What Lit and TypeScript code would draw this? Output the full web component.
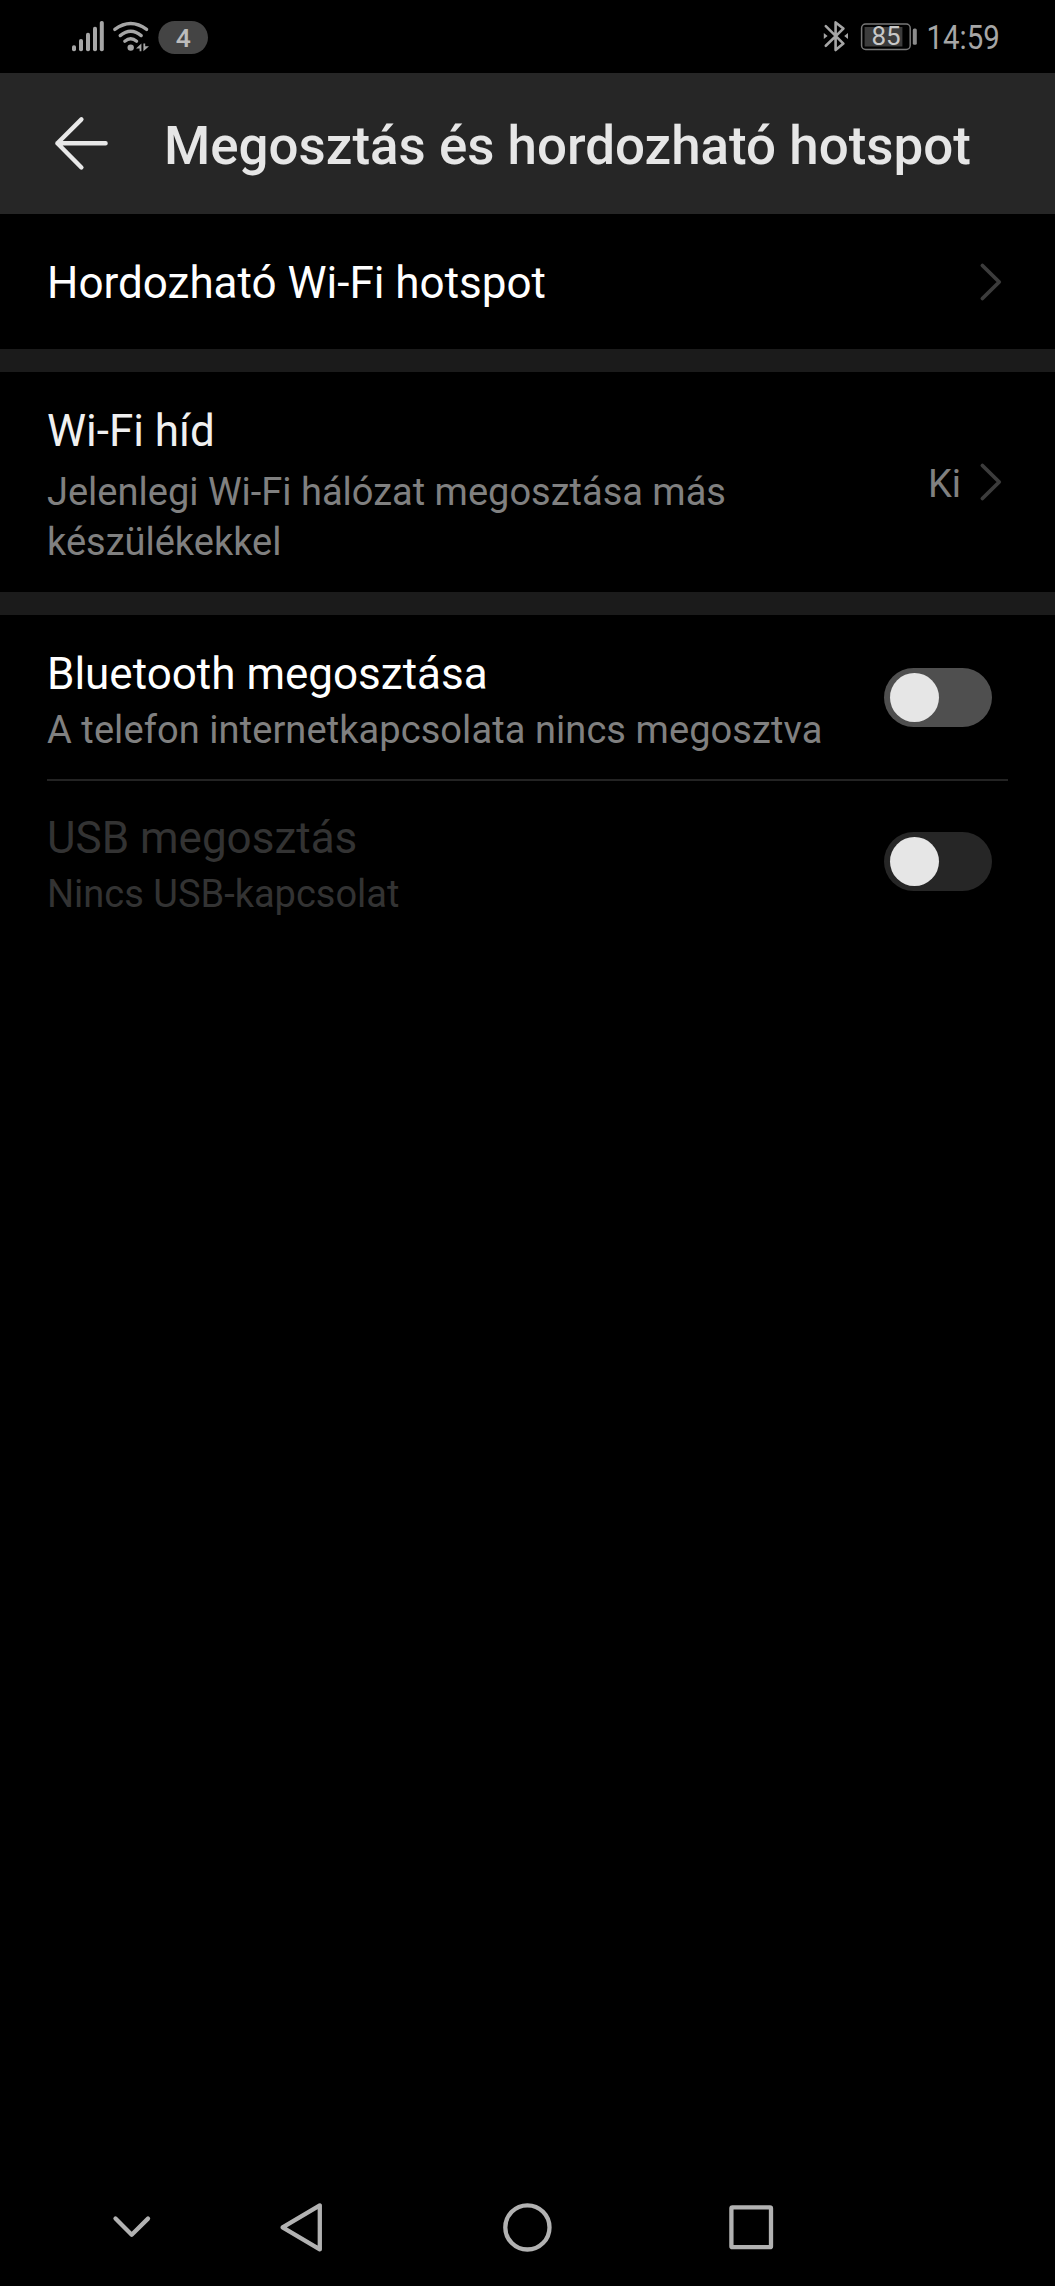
import { LitElement, html, css, svg, nothing } from "lit";
import { customElement, property } from "lit/decorators.js";

@customElement("status-bar")
class StatusBar extends LitElement {
  static styles = css`
    :host {
      display: flex;
      justify-content: space-between;
      height: 73px;
      background: #000;
    }
    svg {
      display: block;
      font-family: Roboto, "Liberation Sans", sans-serif;
    }
  `;

  render() {
    const bars = [
      [72, 45.3],
      [79, 39],
      [86, 32.7],
      [93, 26.7],
      [99.8, 21],
    ];
    return html`
      <svg width="260" height="73" viewBox="0 0 260 73">
        ${bars.map(([x, y]) => svg`<rect x=${x} y=${y} width="4" height=${51.2 - y} rx="1.8" fill="#a6a6a6" />`)}
        <g fill="none" stroke="#a6a6a6" stroke-width="3.3" stroke-linecap="round">
          <path d="M114.8 29.4Q130.7 17.6 146.6 29.4" />
          <path d="M120.2 35.6Q130.7 27 141.2 35.6" />
          <path d="M124.8 41.2Q130.7 36.4 136.6 41.2" />
        </g>
        <circle cx="130.7" cy="47.6" r="3.2" fill="#a6a6a6" />
        <path d="M136 48.4L141.4 43.4V51.2H139.6V48.4ZM143.4 43.4H145.2V46.2H149L143.4 51.2Z" fill="#a6a6a6" />
        <rect x="158.3" y="21" width="49.7" height="33" rx="16.5" fill="#444" />
        <text x="183.3" y="46.7" font-size="26.5" font-weight="500" fill="#bcbcbc" text-anchor="middle">4</text>
      </svg>
      <svg width="255" height="73" viewBox="800 0 255 73">
        <path
          d="M825.8 26.2L843.4 43.6L835.6 50V22.4L843.4 28.6L825.8 45.8"
          fill="none" stroke="#a6a6a6" stroke-width="2.6" stroke-linejoin="round" stroke-linecap="round" />
        <path d="M823.8 33L827.6 36L823.8 39ZM848 33L844.2 36L848 39Z" fill="#a6a6a6" />
        <rect x="861.6" y="24" width="48.6" height="25.4" rx="4" fill="none" stroke="#777" stroke-width="1.5" />
        <rect x="864.6" y="27" width="37.8" height="19.5" fill="#3c3c3c" />
        <rect x="912.8" y="28.6" width="4" height="16.2" rx="1.5" fill="#8c8c8c" />
        <text x="871.4" y="45" font-size="25" fill="#c8c8c8" textLength="29.2" lengthAdjust="spacingAndGlyphs">85</text>
        <text x="926.5" y="49" font-size="33.5" fill="#a6a6a6" textLength="73.2" lengthAdjust="spacingAndGlyphs">14:59</text>
      </svg>
    `;
  }
}

@customElement("title-bar")
class TitleBar extends LitElement {
  @property() heading = "";

  static styles = css`
    :host {
      display: flex;
      align-items: flex-start;
      box-sizing: border-box;
      height: 141px;
      padding-left: 51px;
      background: #262626;
    }
    svg {
      display: block;
      margin-top: 40px;
      width: 60px;
      height: 60px;
    }
    h1 {
      margin: 41px 0 0 53px;
      font: 500 52.9px/64px Roboto, "Liberation Sans", sans-serif;
      color: #e6e6e6;
      white-space: nowrap;
    }
  `;

  render() {
    return html`
      <svg viewBox="51 113 60 60" fill="none" stroke="#e8e8e8" stroke-width="4.4" stroke-linecap="round" stroke-linejoin="round">
        <path d="M81.4 119.4L57.4 143.3L81.4 167.5M57.4 143.3H105.6" />
      </svg>
      <h1>${this.heading}</h1>
    `;
  }
}

@customElement("setting-row")
class SettingRow extends LitElement {
  @property() label = "";
  @property() summary = "";
  @property() value = "";
  @property() control: "link" | "switch" = "link";

  static styles = css`
    :host {
      display: flex;
      justify-content: space-between;
      align-items: center;
      box-sizing: border-box;
      padding-left: 47px;
      font-family: Roboto, "Liberation Sans", sans-serif;
      color: #fff;
    }
    .texts {
      align-self: flex-start;
      padding-top: var(--row-top, 33px);
    }
    .label {
      font-size: 44px;
      line-height: 52px;
      white-space: nowrap;
    }
    .summary {
      margin-top: var(--summary-gap, 6px);
      max-width: 790px;
      font-size: 38px;
      line-height: 49.7px;
      letter-spacing: var(--summary-spacing, normal);
      color: var(--summary-color, #808080);
    }
    .end {
      display: flex;
      align-items: center;
      padding-right: 47px;
    }
    .value {
      margin-right: 13px;
      padding-top: 3px;
      font-size: 38px;
      line-height: 46px;
      color: #808080;
    }
    .chevron {
      display: block;
      width: 34px;
      height: 40px;
    }
    .switch {
      box-sizing: border-box;
      width: 108px;
      height: 59px;
      margin-right: 16px;
      padding: 5px 6px;
      border-radius: 30px;
      background: var(--track, #4f4f4f);
    }
    .thumb {
      width: 49px;
      height: 49px;
      border-radius: 50%;
      background: #e6e6e6;
    }
  `;

  render() {
    return html`
      <div class="texts">
        <div class="label">${this.label}</div>
        ${this.summary ? html`<div class="summary">${this.summary}</div>` : nothing}
      </div>
      <div class="end">
        ${this.value ? html`<span class="value">${this.value}</span>` : nothing}
        ${this.control === "switch"
          ? html`<div class="switch"><div class="thumb"></div></div>`
          : html`<svg class="chevron" viewBox="974 261.5 34 40" fill="none" stroke="#3c3c3c" stroke-width="3.8" stroke-linecap="round" stroke-linejoin="round">
              <path d="M982.4 265L999.2 281.5L982.4 298" />
            </svg>`}
      </div>
    `;
  }
}

@customElement("nav-bar")
class NavBar extends LitElement {
  static styles = css`
    :host {
      display: flex;
      align-items: center;
      height: 118px;
      padding-left: 107px;
    }
    svg {
      display: block;
      width: 50px;
      height: 50px;
      fill: none;
      stroke: #b2b2b2;
      stroke-width: 4.3;
      stroke-linecap: round;
      stroke-linejoin: round;
    }
    .back {
      margin-left: 120px;
    }
    .home {
      margin-left: 175px;
    }
    .recent {
      margin-left: 174px;
    }
  `;

  render() {
    return html`
      <svg viewBox="107 2202 50 50"><path d="M115.5 2218.6L131.7 2234.8L148 2218.6" /></svg>
      <svg class="back" viewBox="277 2202 50 50"><path d="M282.6 2227.4L319.8 2205.4V2249.4Z" /></svg>
      <svg class="home" viewBox="502 2202 50 50"><circle cx="527.4" cy="2227.4" r="22.1" /></svg>
      <svg class="recent" viewBox="726 2202 50 50"><rect x="731.4" y="2207.4" width="39.6" height="39.8" rx="1" /></svg>
    `;
  }
}

@customElement("app-root")
class AppRoot extends LitElement {
  static styles = css`
    :host {
      display: flex;
      flex-direction: column;
      width: 1055px;
      height: 2286px;
      overflow: hidden;
      background: #000;
    }
    .band {
      height: 23px;
      background: #1b1b1b;
    }
    .hotspot {
      height: 135px;
      --row-top: 43px;
    }
    .bridge {
      height: 220px;
      --row-top: 33px;
      --summary-gap: 11px;
      color: #f0f0f0;
    }
    .bluetooth {
      height: 164px;
      --row-top: 33px;
      --summary-spacing: 0.08px;
    }
    .line {
      height: 2px;
      margin: 0 47px;
      background: #232323;
    }
    .usb {
      height: 161px;
      --row-top: 31px;
      color: #333;
      --summary-color: #333;
      --track: #262626;
    }
    nav-bar {
      margin-top: auto;
    }
  `;

  render() {
    return html`
      <status-bar></status-bar>
      <title-bar heading="Megosztás és hordozható hotspot"></title-bar>
      <setting-row class="hotspot" label="Hordozható Wi-Fi hotspot"></setting-row>
      <div class="band"></div>
      <setting-row
        class="bridge"
        label="Wi-Fi híd"
        summary="Jelenlegi Wi-Fi hálózat megosztása más készülékekkel"
        value="Ki"></setting-row>
      <div class="band"></div>
      <setting-row
        class="bluetooth"
        control="switch"
        label="Bluetooth megosztása"
        summary="A telefon internetkapcsolata nincs megosztva"></setting-row>
      <div class="line"></div>
      <setting-row class="usb" control="switch" label="USB megosztás" summary="Nincs USB-kapcsolat"></setting-row>
      <nav-bar></nav-bar>
    `;
  }
}
